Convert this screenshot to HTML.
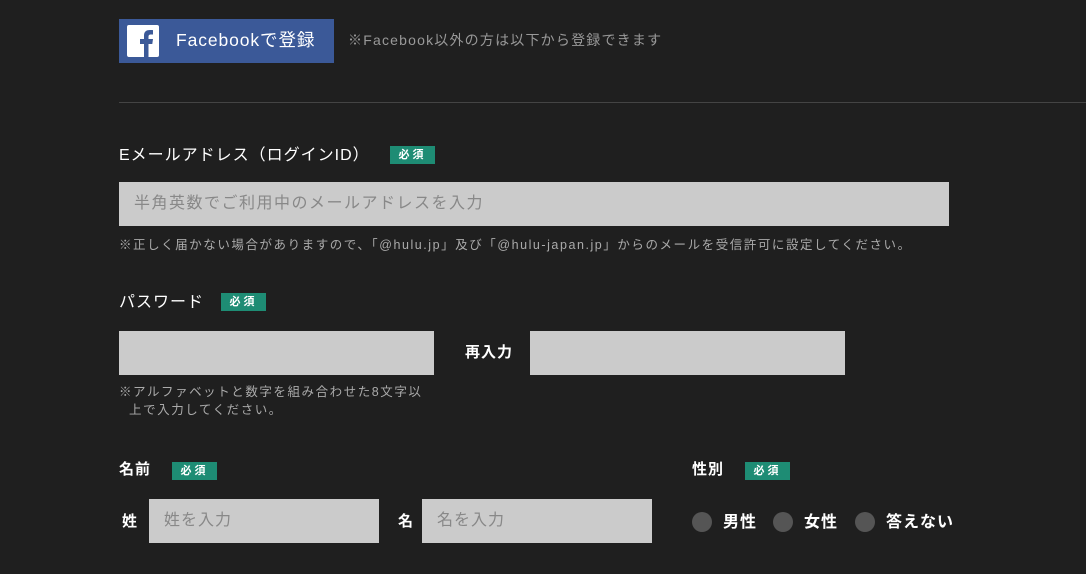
<!DOCTYPE html>
<html><head><meta charset="utf-8"><style>
*{margin:0;padding:0;box-sizing:border-box}
body{width:1086px;height:574px;background:#1f1f1f;position:relative;overflow:hidden;font-family:"Liberation Sans","Noto Sans CJK JP",sans-serif;color:#fff}
.a{position:absolute;white-space:nowrap}
.fb{left:119px;top:19px;width:215px;height:44px;background:#3b5998}
.fbi{left:127px;top:25px;width:32px;height:32px;background:#fff;border-radius:2px}
.badge{position:absolute;height:18px;width:45px;background:#1e8c74;color:#fff;font-size:11px;font-weight:bold;line-height:18px;text-align:center;letter-spacing:3px}
.in{position:absolute;background:#cbcbcb;height:44px;color:#888;font-size:16px;line-height:44px;padding-left:15px}
.lbl{font-size:16px;font-weight:bold;color:#fff;letter-spacing:1px}
.note{font-size:12.5px;color:#aaa;letter-spacing:1.55px}
.r{position:absolute;width:20px;height:20px;border-radius:50%;background:#555;top:512px}
</style></head><body>
<div class="a fb"></div>
<div class="a fbi"><svg width="32" height="32" viewBox="0 0 32 32"><path d="M17 32V19h-4v-5h4v-3.5C17 6.5 19.5 5 23 5c1.6 0 3 .1 3 .1V9.5h-2c-2 0-2.5 1-2.5 2.3V14h4.5l-.7 5H21.5v13z" fill="#3b5998"/></svg></div>
<div class="a" style="left:176px;top:30px;font-size:17.5px;letter-spacing:.9px;line-height:20px">Facebookで登録</div>
<div class="a" style="left:348px;top:31px;font-size:14px;color:#999;letter-spacing:1.2px;line-height:18px">※Facebook以外の方は以下から登録できます</div>
<div class="a" style="left:119px;top:102px;width:967px;height:1px;background:#444"></div>

<div class="a lbl" style="left:119px;top:146px;font-weight:normal;line-height:20px">Eメールアドレス（ログインID）</div>
<div class="badge" style="left:390px;top:146px">必須</div>
<div class="in" style="left:119px;top:182px;width:830px;letter-spacing:1.5px">半角英数でご利用中のメールアドレスを入力</div>
<div class="a note" style="left:119px;top:234px">※正しく届かない場合がありますので、「@hulu.jp」及び「@hulu-japan.jp」からのメールを受信許可に設定してください。</div>

<div class="a lbl" style="left:119px;top:293px;font-weight:normal;line-height:20px">パスワード</div>
<div class="badge" style="left:221px;top:293px">必須</div>
<div class="in" style="left:119px;top:331px;width:315px"></div>
<div class="a lbl" style="left:465px;top:341px;font-size:15px">再入力</div>
<div class="in" style="left:530px;top:331px;width:315px"></div>
<div class="a note" style="left:119px;top:383px;line-height:18px">※アルファベットと数字を組み合わせた8文字以<br>&nbsp;&nbsp;上で入力してください。</div>

<div class="a lbl" style="left:119px;top:460px;font-size:15px;line-height:20px">名前</div>
<div class="badge" style="left:172px;top:462px">必須</div>
<div class="a lbl" style="left:692px;top:460px;font-size:15px;line-height:20px">性別</div>
<div class="badge" style="left:745px;top:462px">必須</div>
<div class="a lbl" style="left:122px;top:512px;font-size:15px;line-height:20px">姓</div>
<div class="in" style="left:149px;top:499px;width:230px;letter-spacing:1px">姓を入力</div>
<div class="a lbl" style="left:398px;top:512px;font-size:15px;line-height:20px">名</div>
<div class="in" style="left:422px;top:499px;width:230px;letter-spacing:1px">名を入力</div>
<div class="r" style="left:692px"></div>
<div class="a lbl" style="left:723px;top:513px;line-height:20px">男性</div>
<div class="r" style="left:773px"></div>
<div class="a lbl" style="left:804px;top:513px;line-height:20px">女性</div>
<div class="r" style="left:855px"></div>
<div class="a lbl" style="left:886px;top:513px;line-height:20px">答えない</div>
</body></html>
